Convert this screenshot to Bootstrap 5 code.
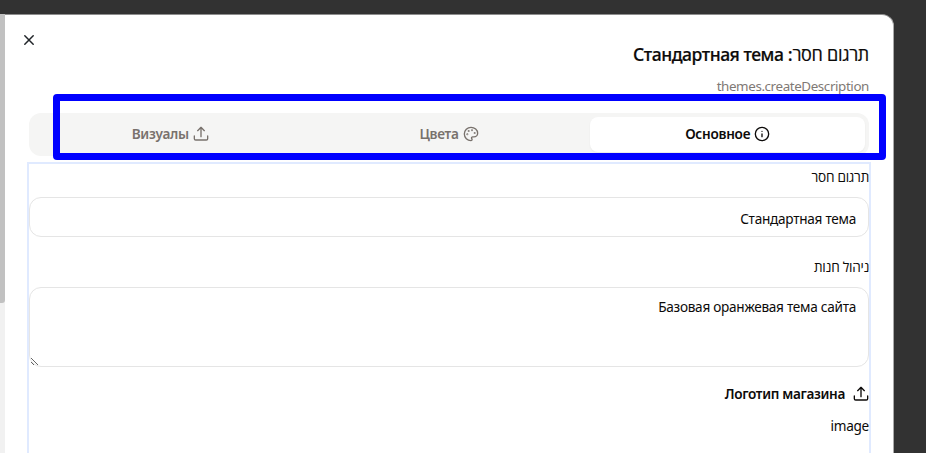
<!DOCTYPE html>
<html lang="ru" dir="rtl">
<head>
<meta charset="utf-8">
<title>Стандартная тема</title>
<link href="https://cdn.jsdelivr.net/npm/bootstrap@5.3.0/dist/css/bootstrap.min.css" rel="stylesheet">
<style>
body{height:453px;background:#323232;color:#0c0a09;font-family:"Noto Sans","Open Sans",sans-serif;font-size:13.6px;line-height:20px;letter-spacing:-.27px}
.scroll-track{width:5px;height:439px;background:#f1f1f1}
.scroll-thumb{height:289px;background:#c1c1c1;border-radius:0 0 3px 0}
.page-shell{height:453px;padding:14px 32px 0 0;direction:rtl}
.theme-dialog{width:889px;height:460px;padding:30px 24px 0 24px;background:#fff;border-radius:0 12px 0 0;border-top:1px solid #8d8d8d;border-right:1px solid #aaa}
.close-btn{left:17px;top:18px;width:14px;height:14px;line-height:0}
.dialog-title{font-size:18px;line-height:18px;font-weight:500;letter-spacing:-.3px;margin-bottom:13px;-webkit-text-stroke:.2px currentColor}
.title-name{font-size:17.5px;letter-spacing:-.45px}
.muted-text{color:#7f7975}
.key-text{font-size:13.4px;letter-spacing:-.4px}
.tab-strip{height:43px;margin-top:17px;padding:4px;gap:4px;background:#f5f5f4;border-radius:12px;color:#78716c}
.tab-item{gap:4px;height:35px;padding-bottom:1px;border-radius:8px;font-weight:600}
.tab-current{background:#fff;color:#0c0a09;box-shadow:0 1px 2px rgba(0,0,0,.05)}
.panel-frame{margin:6px -2px 0;height:300px;border:2px solid #e0eaff;padding-top:3px}
.field-box{border:1px solid #e5e5e5;border-radius:12px;padding:10px 12px;color:#0c0a09;background:#fff;font-size:13.6px;line-height:20px;letter-spacing:-.27px}
.field-box:focus{box-shadow:none}
.field-one{height:40px;padding-top:11px;padding-bottom:9px;margin-top:10px;margin-bottom:20px}
.field-two{height:80px;padding-top:9px;margin-top:10px;margin-bottom:17px}
.logo-row{letter-spacing:-.33px}
.marker-frame{left:53px;top:94px;width:833px;height:66px;border:7px solid #00f;border-radius:4px;z-index:5}
.line-icon{fill:none;stroke:currentColor;stroke-width:2;stroke-linecap:round;stroke-linejoin:round;flex:none}
.close-icon{stroke-width:1.5}
</style>
<script src="https://cdn.jsdelivr.net/npm/bootstrap@5.3.0/dist/js/bootstrap.bundle.min.js"></script>
</head>
<body class="overflow-hidden position-relative">
<div class="page-shell d-flex overflow-hidden">
  <main class="theme-dialog position-relative flex-shrink-0">
    <button class="close-btn btn p-0 border-0 position-absolute" aria-label="Close"><svg class="line-icon close-icon" width="14" height="14" viewBox="0 0 14 14"><path d="M2.8 2.8l8.4 8.4M11.2 2.8l-8.4 8.4"/></svg></button>
    <h1 class="dialog-title">תרגום חסר: <span class="title-name">Стандартная тема</span></h1>
    <div class="muted-text key-text">themes.createDescription</div>
    <div class="tab-strip d-flex">
      <div class="tab-item tab-current d-flex align-items-center justify-content-center col"><svg class="line-icon" width="16" height="16" viewBox="0 0 24 24"><circle cx="12" cy="12" r="10"/><path d="M12 16v-4M12 8h.01"/></svg><span>Основное</span></div>
      <div class="tab-item d-flex align-items-center justify-content-center col"><svg class="line-icon" width="16" height="16" viewBox="0 0 24 24"><circle cx="13.5" cy="6.5" r=".5"/><circle cx="17.5" cy="10.5" r=".5"/><circle cx="8.5" cy="7.5" r=".5"/><circle cx="6.5" cy="12.5" r=".5"/><path d="M12 2C6.5 2 2 6.5 2 12s4.500 10 10 10c.926 0 1.648-.746 1.648-1.688 0-.437-.18-.835-.437-1.125-.29-.289-.438-.652-.438-1.125a1.640 1.640 0 0 1 1.668-1.668h1.996c3.051 0 5.555-2.503 5.555-5.554C21.965 6.012 17.461 2 12 2z"/></svg><span>Цвета</span></div>
      <div class="tab-item d-flex align-items-center justify-content-center col"><svg class="line-icon" width="16" height="16" viewBox="0 0 24 24"><path d="M12 16V3M7 7l5-5 5 5M2 15v4a2 2 0 0 0 2 2h16a2 2 0 0 0 2-2v-4"/></svg><span>Визуалы</span></div>
    </div>
    <section class="panel-frame">
      <label class="d-block" for="themeName">תרגום חסר</label>
      <input id="themeName" class="form-control field-box field-one" value="Стандартная тема">
      <label class="d-block" for="themeText">ניהול חנות</label>
      <textarea id="themeText" class="form-control field-box field-two">Базовая оранжевая тема сайта</textarea>
      <div class="logo-row d-flex align-items-center gap-2 fw-semibold"><svg class="line-icon" width="16" height="16" viewBox="0 0 24 24"><path d="M12 16V3M7 7l5-5 5 5M2 15v4a2 2 0 0 0 2 2h16a2 2 0 0 0 2-2v-4"/></svg><span>Логотип магазина</span></div>
      <div class="mt-2 pt-1">image</div>
    </section>
  </main>
  <div class="scroll-track flex-shrink-0"><div class="scroll-thumb"></div></div>
</div>
<div class="marker-frame position-absolute"></div>
</body>
</html>
